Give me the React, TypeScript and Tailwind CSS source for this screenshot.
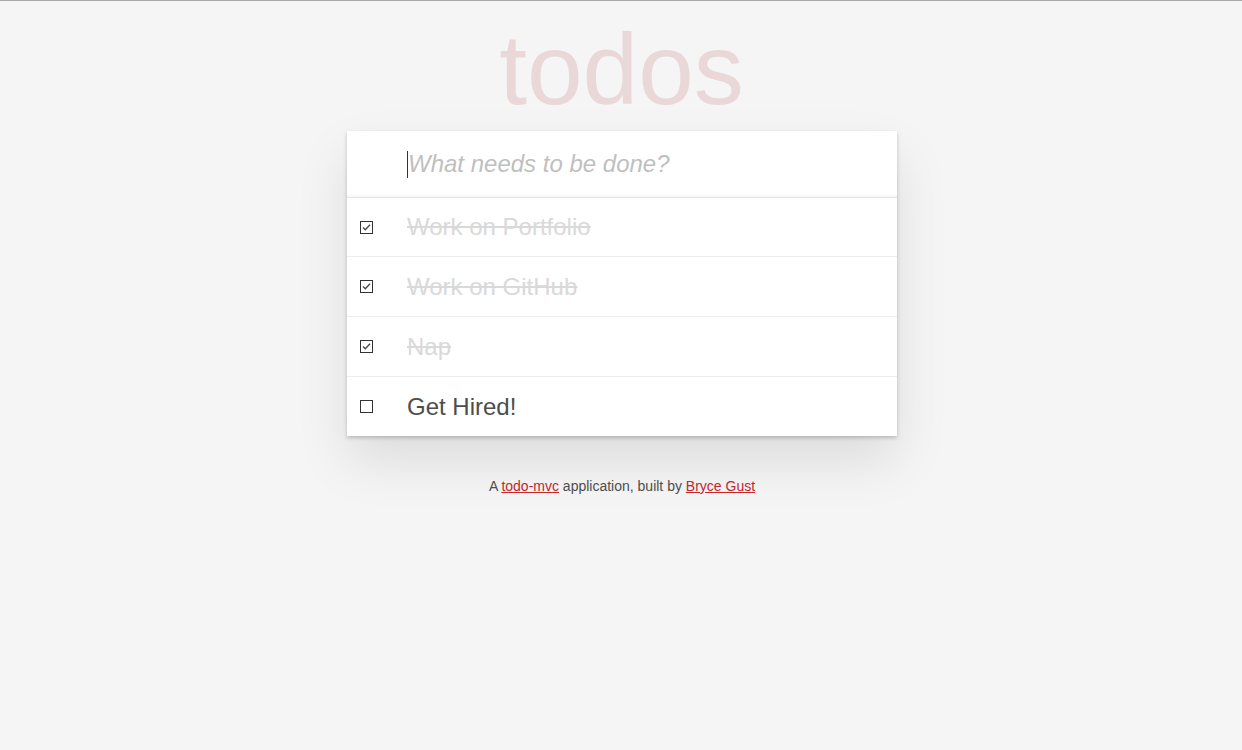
import React from "react";

function Check({ checked }: { checked: boolean }) {
  return (
    <svg width="13" height="13" viewBox="0 0 13 13" className="shrink-0">
      <rect x="0.5" y="0.5" width="12" height="12" fill="#fff" stroke="#333" strokeWidth="1" />
      {checked && (
        <path d="M3 6.5 L5.3 8.8 L10 3.8" fill="none" stroke="#444" strokeWidth="1.3" />
      )}
    </svg>
  );
}

const todos = [
  { text: "Work on Portfolio", done: true, h: "h-[59px] border-b border-[#ededed]" },
  { text: "Work on GitHub", done: true, h: "h-[60px] border-b border-[#ededed]" },
  { text: "Nap", done: true, h: "h-[60px] border-b border-[#ededed]" },
  { text: "Get Hired!", done: false, h: "h-[59px]" },
];

export default function App() {
  return (
    <div
      className="min-h-[750px] bg-[#f5f5f5] border-t border-[#a9a9a9] flex flex-col items-center"
      style={{ fontFamily: '"Liberation Sans", Arial, sans-serif' }}
    >
      <h1 className="mt-[18px] ml-[1px] h-[112px] text-[100px] leading-[100px] text-[rgba(175,47,47,0.15)] font-thin text-center">
        todos
      </h1>
      <div className="ml-[2px] w-[550px] bg-white shadow-[0_2px_4px_0_rgba(0,0,0,0.2),0_25px_50px_0_rgba(0,0,0,0.1)]">
        <div className="h-[67px] flex items-center pl-[60px] border-b border-[#e6e6e6] shadow-[inset_0_-2px_1px_rgba(0,0,0,0.03)]">
          <span className="w-px h-[27px] bg-[#333]" />
          <span className="text-[24px] italic text-[#bfbfbf]">What needs to be done?</span>
        </div>
        <ul>
          {todos.map((t) => (
            <li key={t.text} className={`${t.h} flex items-center`}>
              <div className="w-[60px] flex justify-center pr-[21px]">
                <Check checked={t.done} />
              </div>
              <span
                className={`text-[24px] ${t.done ? "line-through text-[#d9d9d9]" : "text-[#4d4d4d]"}`}
              >
                {t.text}
              </span>
            </li>
          ))}
        </ul>
      </div>
      <p className="mt-[40px] ml-[2px] text-[14px] text-[#4d4d4d]">
        A <a className="underline text-[#c4262e]">todo-mvc</a> application, built by{" "}
        <a className="underline text-[#c4262e]">Bryce Gust</a>
      </p>
    </div>
  );
}
